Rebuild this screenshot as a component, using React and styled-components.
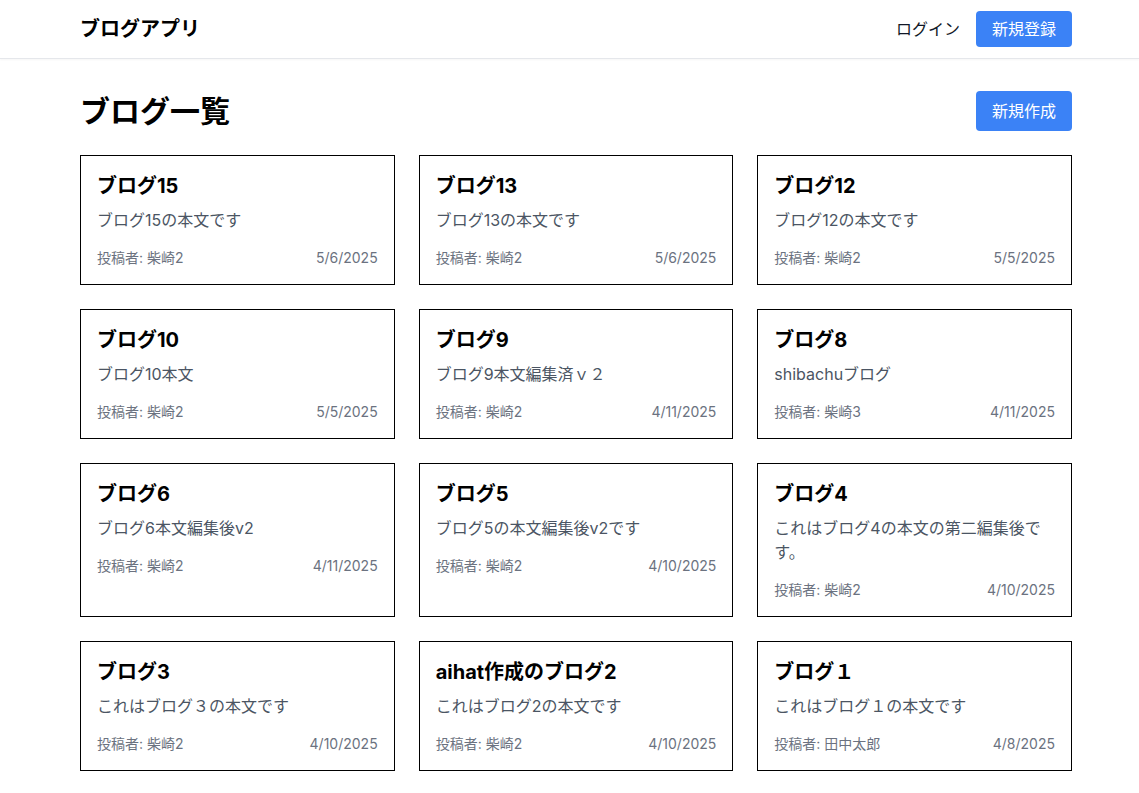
import React from 'react';
import styled, { createGlobalStyle } from 'styled-components';

const GlobalStyle = createGlobalStyle`
  * { box-sizing: border-box; }
  body {
    margin: 0;
    background: #ffffff;
    color: #000000;
    font-family: Inter, "Noto Sans CJK JP", sans-serif;
  }
`;

const Header = styled.header`
  display: flex;
  align-items: center;
  justify-content: space-between;
  height: 59px;
  padding: 0 67px 0 80px;
  border-bottom: 1px solid #e5e7eb;
  box-shadow: 0 1px 2px rgba(0, 0, 0, 0.04);
`;

const Brand = styled.div`
  font-size: 20px;
  font-weight: 700;
  line-height: 28px;
`;

const Nav = styled.nav`
  display: flex;
  align-items: center;
  gap: 16px;
`;

const NavLink = styled.a`
  font-size: 16px;
  line-height: 24px;
  color: #111827;
  cursor: pointer;
`;

const BlueButton = styled.button`
  font-family: inherit;
  font-size: 16px;
  line-height: 24px;
  color: #ffffff;
  background: #3b82f6;
  border: none;
  border-radius: 4px;
  padding: ${p => (p.$tall ? '8px 16px' : '6px 16px')};
  cursor: pointer;
`;

const Main = styled.main`
  padding: 32px 67px 22px 80px;
`;

const TitleRow = styled.div`
  display: flex;
  align-items: center;
  justify-content: space-between;
  margin-bottom: 24px;
`;

const PageTitle = styled.h1`
  margin: 0;
  font-size: 30px;
  line-height: 36px;
  font-weight: 700;
`;

const Grid = styled.div`
  display: grid;
  grid-template-columns: repeat(3, 1fr);
  gap: 24px;
`;

const Card = styled.article`
  border: 1px solid #000000;
  padding: 16px;
`;

const CardTitle = styled.h2`
  margin: 0 0 8px;
  font-size: 20px;
  line-height: 28px;
  font-weight: 700;
`;

const CardBody = styled.p`
  margin: 0;
  font-size: 16px;
  line-height: 24px;
  color: #4b5563;
`;

const CardFooter = styled.div`
  display: flex;
  justify-content: space-between;
  margin-top: 16px;
  font-size: 14px;
  line-height: 20px;
  color: #6b7280;
`;

const posts = [
  { title: 'ブログ15', body: 'ブログ15の本文です', author: '柴崎2', date: '5/6/2025' },
  { title: 'ブログ13', body: 'ブログ13の本文です', author: '柴崎2', date: '5/6/2025' },
  { title: 'ブログ12', body: 'ブログ12の本文です', author: '柴崎2', date: '5/5/2025' },
  { title: 'ブログ10', body: 'ブログ10本文', author: '柴崎2', date: '5/5/2025' },
  { title: 'ブログ9', body: 'ブログ9本文編集済ｖ２', author: '柴崎2', date: '4/11/2025' },
  { title: 'ブログ8', body: 'shibachuブログ', author: '柴崎3', date: '4/11/2025' },
  { title: 'ブログ6', body: 'ブログ6本文編集後v2', author: '柴崎2', date: '4/11/2025' },
  { title: 'ブログ5', body: 'ブログ5の本文編集後v2です', author: '柴崎2', date: '4/10/2025' },
  { title: 'ブログ4', body: 'これはブログ4の本文の第二編集後です。', author: '柴崎2', date: '4/10/2025' },
  { title: 'ブログ3', body: 'これはブログ３の本文です', author: '柴崎2', date: '4/10/2025' },
  { title: 'aihat作成のブログ2', body: 'これはブログ2の本文です', author: '柴崎2', date: '4/10/2025' },
  { title: 'ブログ１', body: 'これはブログ１の本文です', author: '田中太郎', date: '4/8/2025' },
];

export default function App() {
  return (
    <>
      <GlobalStyle />
      <Header>
        <Brand>ブログアプリ</Brand>
        <Nav>
          <NavLink>ログイン</NavLink>
          <BlueButton>新規登録</BlueButton>
        </Nav>
      </Header>
      <Main>
        <TitleRow>
          <PageTitle>ブログ一覧</PageTitle>
          <BlueButton $tall>新規作成</BlueButton>
        </TitleRow>
        <Grid>
          {posts.map((p, i) => (
            <Card key={i}>
              <CardTitle>{p.title}</CardTitle>
              <CardBody>{p.body}</CardBody>
              <CardFooter>
                <span>投稿者: {p.author}</span>
                <span>{p.date}</span>
              </CardFooter>
            </Card>
          ))}
        </Grid>
      </Main>
    </>
  );
}
